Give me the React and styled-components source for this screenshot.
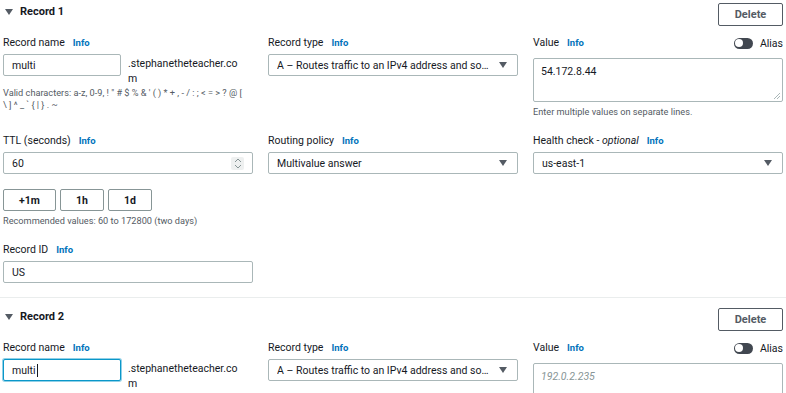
import React from "react";
import styled, { createGlobalStyle } from "styled-components";

const GlobalStyle = createGlobalStyle`
  html, body {
    margin: 0;
    padding: 0;
    background: #fff;
  }
  body {
    font-family: "Roboto", "Liberation Sans", Arial, sans-serif;
    color: #16191f;
  }
`;

// markup
const Caret = () => (
  <svg width="8" height="6" viewBox="0 0 8 6">
    <path d="M0 0 L8 0 L4 6 Z" fill="#545b64" />
  </svg>
);

const Spinner = () => (
  <SpinBox>
    <svg width="8" height="11" viewBox="0 0 8 11">
      <path d="M1 4 L4 1 L7 4" fill="none" stroke="#879596" strokeWidth="1" />
      <path d="M1 7 L4 10 L7 7" fill="none" stroke="#879596" strokeWidth="1" />
    </svg>
  </SpinBox>
);

const ResizeGrip = () => (
  <Grip width="7" height="7" viewBox="0 0 7 7">
    <path d="M1 7 L7 1 M4 7 L7 4" stroke="#aab7b8" strokeWidth="1" />
  </Grip>
);

const Label = ({ children, optional }) => (
  <LabelText>
    <span>
      {children}
      {optional && (
        <>
          {" - "}
          <i>optional</i>
        </>
      )}
    </span>
    <Info>Info</Info>
  </LabelText>
);

const RecordBlock = ({ index, top, divider, full }) => (
  <Record $top={top} $divider={divider}>
    <Header>
      <Title>
        <Caret />
        Record {index}
      </Title>
      <DeleteButton>Delete</DeleteButton>
    </Header>

    <Grid>
      <Field>
        <LabelRow>
          <Label>Record name</Label>
        </LabelRow>
        <NameRow>
          <Input $width={118} $focused={!full}>
            multi
            {!full && <TextCaret />}
          </Input>
          <Suffix>
            .stephanetheteacher.co
            <br />m
          </Suffix>
        </NameRow>
        {full && (
          <Hint $mt={1}>
            Valid characters: a-z, 0-9, ! " # $ % &amp; ' ( ) * + , - / : ; &lt; = &gt; ? @ [
            <br />\ ] ^ _ ` {"{"} | {"}"} . ~
          </Hint>
        )}
      </Field>

      <Field>
        <LabelRow>
          <Label>Record type</Label>
        </LabelRow>
        <Select>
          <SelectText>A – Routes traffic to an IPv4 address and some AWS resources</SelectText>
          <Caret />
        </Select>
      </Field>

      <Field>
        <LabelRow $tall>
          <Label>Value</Label>
          <AliasToggle>
            <Toggle>
              <Knob />
            </Toggle>
            Alias
          </AliasToggle>
        </LabelRow>
        <TextArea $placeholder={!full}>
          {full ? "54.172.8.44" : "192.0.2.235"}
          <ResizeGrip />
        </TextArea>
        {full && <Hint $mt={4}>Enter multiple values on separate lines.</Hint>}
      </Field>

      {full && (
        <>
          <Field>
            <LabelRow>
              <Label>TTL (seconds)</Label>
            </LabelRow>
            <Input>
              60
              <Spinner />
            </Input>
            <Presets>
              <PresetButton $width={53}>+1m</PresetButton>
              <PresetButton $width={44}>1h</PresetButton>
              <PresetButton $width={44}>1d</PresetButton>
            </Presets>
            <Hint $mt={4}>Recommended values: 60 to 172800 (two days)</Hint>
          </Field>

          <Field>
            <LabelRow>
              <Label>Routing policy</Label>
            </LabelRow>
            <Select>
              <SelectText>Multivalue answer</SelectText>
              <Caret />
            </Select>
          </Field>

          <Field>
            <LabelRow>
              <Label optional>Health check</Label>
            </LabelRow>
            <Select>
              <SelectText>us-east-1</SelectText>
              <Caret />
            </Select>
          </Field>

          <Field>
            <LabelRow>
              <Label>Record ID</Label>
            </LabelRow>
            <Input>US</Input>
          </Field>
        </>
      )}
    </Grid>
  </Record>
);

const App = () => (
  <Page>
    <GlobalStyle />
    <RecordBlock index={1} top={3} divider full />
    <RecordBlock index={2} top={10} />
  </Page>
);

export default App;

const Page = styled.div`
  width: 786px;
  height: 393px;
  overflow: hidden;
  background: #fff;
`;

const Record = styled.section`
  padding: ${({ $top }) => $top}px 3px 14px;
  border-bottom: ${({ $divider }) => ($divider ? "1px solid #eaeded" : "none")};
`;

const Header = styled.div`
  display: flex;
  justify-content: space-between;
  align-items: flex-start;
  height: 23px;
`;

const Title = styled.div`
  display: flex;
  align-items: center;
  gap: 7px;
  padding: 2px 0 0 2px;
  font-size: 11px;
  line-height: 14px;
  font-weight: 700;
  color: #16191f;
`;

const DeleteButton = styled.button`
  width: 65px;
  height: 23px;
  border: 1px solid #545b64;
  border-radius: 2px;
  background: #fff;
  color: #545b64;
  font-family: inherit;
  font-size: 11px;
  font-weight: 700;
  padding: 0;
`;

const Grid = styled.div`
  display: grid;
  grid-template-columns: repeat(3, 250px);
  column-gap: 15px;
  row-gap: 16px;
  margin-top: 10px;
  align-items: start;
`;

const Field = styled.div`
  display: flex;
  flex-direction: column;
`;

const LabelRow = styled.div`
  display: flex;
  align-items: center;
  justify-content: space-between;
  height: 14px;
  margin-bottom: ${({ $tall }) => ($tall ? 8 : 4)}px;
`;

const LabelText = styled.div`
  display: flex;
  align-items: center;
  gap: 8px;
  font-size: 10.5px;
  line-height: 14px;
  color: #16191f;

  & i {
    font-style: italic;
  }
`;

const Info = styled.span`
  font-size: 9.5px;
  font-weight: 700;
  color: #0073bb;
`;

const AliasToggle = styled.div`
  display: flex;
  align-items: center;
  gap: 7px;
  font-size: 10.5px;
  color: #16191f;
`;

const Toggle = styled.span`
  display: flex;
  align-items: center;
  width: 19px;
  height: 11px;
  border-radius: 6px;
  background: #414750;
  box-sizing: border-box;
  padding: 0 1.5px;
`;

const Knob = styled.span`
  width: 8px;
  height: 8px;
  border-radius: 50%;
  background: #fff;
`;

const NameRow = styled.div`
  display: flex;
  align-items: flex-start;
  gap: 7px;
`;

const Input = styled.div`
  position: relative;
  display: flex;
  align-items: center;
  box-sizing: border-box;
  width: ${({ $width }) => ($width ? `${$width}px` : "100%")};
  height: 22px;
  padding: 0 8px;
  border: 1px solid ${({ $focused }) => ($focused ? "#0a97c9" : "#aab7b8")};
  box-shadow: ${({ $focused }) => ($focused ? "0 0 0 1px rgba(10, 151, 201, 0.45)" : "none")};
  border-radius: 2px;
  font-size: 10.5px;
  color: #16191f;
  background: #fff;
`;

const TextCaret = styled.span`
  width: 1px;
  height: 13px;
  margin-left: 1px;
  background: #16191f;
`;

const SpinBox = styled.span`
  position: absolute;
  right: 8px;
  top: 4px;
  width: 13px;
  height: 13px;
  display: flex;
  align-items: center;
  justify-content: center;
  background: #eef0f0;
  border-radius: 2px;
`;

const Suffix = styled.div`
  padding-top: 2px;
  font-size: 10.5px;
  line-height: 15px;
  color: #16191f;
`;

const Hint = styled.div`
  margin-top: ${({ $mt }) => $mt}px;
  font-size: 9.2px;
  line-height: 12px;
  color: #545b64;
`;

const Select = styled.div`
  display: flex;
  align-items: center;
  gap: 10px;
  box-sizing: border-box;
  height: 22px;
  padding: 0 10px 0 8px;
  border: 1px solid #aab7b8;
  border-radius: 2px;
  background: #fff;
`;

const SelectText = styled.span`
  flex: 1;
  min-width: 0;
  white-space: nowrap;
  overflow: hidden;
  text-overflow: ellipsis;
  font-size: 10.5px;
  color: #16191f;
`;

const TextArea = styled.div`
  position: relative;
  box-sizing: border-box;
  height: 44px;
  padding: 6px 7px;
  border: 1px solid #aab7b8;
  border-radius: 2px;
  font-size: 10.5px;
  line-height: 14px;
  color: ${({ $placeholder }) => ($placeholder ? "#879596" : "#16191f")};
  font-style: ${({ $placeholder }) => ($placeholder ? "italic" : "normal")};
`;

const Grip = styled.svg`
  position: absolute;
  right: 2px;
  bottom: 2px;
`;

const Presets = styled.div`
  display: flex;
  gap: 4px;
  margin-top: 15px;
`;

const PresetButton = styled.button`
  width: ${({ $width }) => $width}px;
  height: 22px;
  padding: 0;
  border: 1px solid #879596;
  border-radius: 2px;
  background: #fff;
  color: #16191f;
  font-family: inherit;
  font-size: 10.5px;
  font-weight: 700;
`;
